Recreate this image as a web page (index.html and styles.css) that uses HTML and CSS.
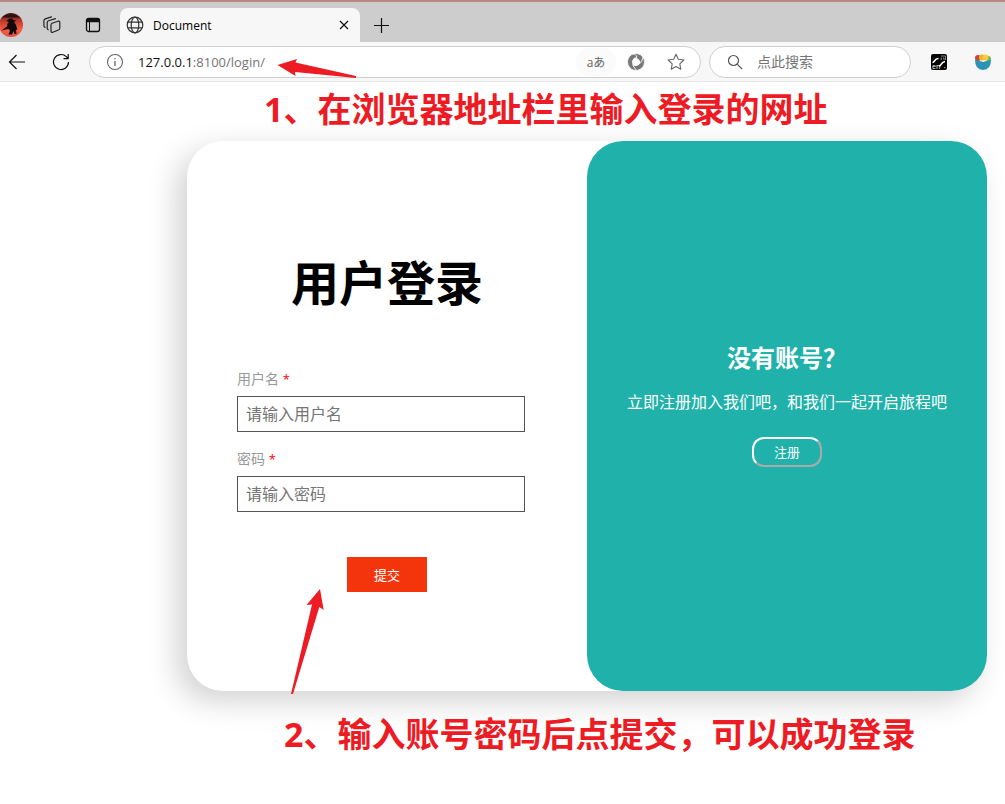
FILE: index.html
```html
<!DOCTYPE html>
<html lang="zh-CN">
<head>
<meta charset="utf-8">
<meta name="viewport" content="width=device-width, initial-scale=1">
<title>Document</title>
<link rel="stylesheet" href="styles.css">
</head>
<body>
<header class="browser">
  <div class="tabs">
    <div class="tab-tools">
      <button class="icon-btn" aria-label="个人资料">
        <svg width="24" height="24" viewBox="0 0 24 24"><defs><linearGradient id="sky" x1="0" y1="0" x2="0" y2="1"><stop offset="0" stop-color="#3a1512"/><stop offset=".3" stop-color="#b8372a"/><stop offset=".7" stop-color="#ff5b43"/><stop offset="1" stop-color="#d8523f"/></linearGradient></defs><circle cx="12" cy="12" r="12" fill="url(#sky)"/><path d="M2.500 4.500Q12-2 21.500 4.500z" fill="#2a1210"/><path d="M9 7l1-1.500h3L14.500 7l3 .8-2.500 1 2 3.200 1.500 5-1.500-.5.5 4.500h-2l-1-3-1.500 3.500H9.500l1.500-4-1.500-1.500L2 17.500l6-4 .5-3L10 9 7 8z" fill="#120a0a"/></svg>
      </button>
      <button class="icon-btn" aria-label="工作区">
        <svg width="18" height="18" viewBox="0 0 18 18" fill="none" stroke="#222" stroke-width="1.200" stroke-linecap="round" stroke-linejoin="round"><path d="M9 7.200l6-2q1.800-.5 1.800 1.300v5.500q0 1.500-1.400 2l-5.600 2.200q-1.800.6-1.800-1.200V9q0-1.300 1-1.800zM5.200 13.800q-1-.3-1-1.500V6.800q0-1.500 1.300-2L12.500 2.600M2 11.300Q.9 11 .9 9.800V4.800Q.9 3.400 2.200 2.900L8.500.9"/></svg>
      </button>
      <button class="icon-btn" aria-label="标签页操作">
        <svg width="16" height="16" viewBox="0 0 16 16" fill="none" stroke="#111" stroke-width="1.300"><rect x="1.500" y="1.500" width="13" height="13" rx="2"/><path d="M1.500 3.500h13" stroke-width="3.500"/><path d="M4.500 5v9.500" stroke-width="1"/></svg>
      </button>
    </div>
    <div class="tab">
      <svg width="18" height="18" viewBox="0 0 18 18" fill="none" stroke="#333" stroke-width="1.200"><circle cx="9" cy="9" r="7.800"/><ellipse cx="9" cy="9" rx="3.800" ry="7.800"/><path d="M1.800 6.200h14.400M1.800 11.800h14.400"/></svg>
      <span class="tab-title">Document</span>
      <button class="icon-btn" aria-label="关闭标签页"><svg width="10" height="10" viewBox="0 0 10 10" stroke="#111" stroke-width="1.200"><path d="M1 1l8 8M9 1L1 9"/></svg></button>
    </div>
    <button class="icon-btn new-tab" aria-label="新建标签页"><svg width="15" height="15" viewBox="0 0 15 15" stroke="#111" stroke-width="1.200"><path d="M7.500 0v15M0 7.500h15"/></svg></button>
  </div>
  <div class="toolbar">
    <div class="nav">
      <button class="icon-btn" aria-label="后退"><svg width="18" height="16" viewBox="0 0 18 16" fill="none" stroke="#111" stroke-width="1.200"><path d="M17 8H1.500M8.500 1l-7 7 7 7"/></svg></button>
      <button class="icon-btn" aria-label="刷新"><svg width="18" height="18" viewBox="0 0 18 18" fill="none" stroke="#111" stroke-width="1.200"><path d="M16.500 9a7.500 7.500 0 1 1-2.200-5.300L16 5.500M16.200 1v4.700h-4.700"/></svg></button>
    </div>
    <div class="address">
      <svg width="18" height="18" viewBox="0 0 18 18" fill="none" stroke="#666" stroke-width="1.100"><circle cx="9" cy="9" r="7.500"/><path d="M9 8v5M9 5v1.300" stroke-width="1.300"/></svg>
      <a class="url" href="#"><span class="host">127.0.0.1</span>:8100/login/</a>
      <button class="icon-btn translate" aria-label="翻译">aあ</button>
      <button class="icon-btn" aria-label="扩展">
        <svg width="18" height="18" viewBox="0 0 18 18" fill="#777" stroke="#fff" stroke-width=".8"><defs><path id="blade" d="M1.300 5.300A8.600 8.600 0 0 1 17.600 9Q17 13.500 12.500 12Q14 9 11.500 6.500Q7.500 3.300 1.300 5.300z"/></defs><use href="#blade"/><use href="#blade" transform="rotate(120 9 9)"/><use href="#blade" transform="rotate(240 9 9)"/></svg>
      </button>
      <button class="icon-btn" aria-label="收藏"><svg width="18" height="18" viewBox="0 0 18 18" fill="none" stroke="#666" stroke-width="1.100" stroke-linejoin="round"><path d="M9 1.300l2.300 5 5.500.7-4 3.800 1 5.500L9 13.600l-4.800 2.700 1-5.500-4-3.800 5.500-.7z"/></svg></button>
    </div>
    <label class="search">
      <svg width="16" height="16" viewBox="0 0 16 16" fill="none" stroke="#555" stroke-width="1.200"><circle cx="6.500" cy="6.500" r="5"/><path d="M10.200 10.200l5 5"/></svg>
      <input type="search" placeholder="点此搜索" aria-label="点此搜索">
    </label>
    <div class="extensions">
      <button class="icon-btn" aria-label="翻译扩展"><svg width="16" height="16" viewBox="0 0 16 16"><rect width="16" height="16" rx="2" fill="#050505"/><path d="M1.500 8.500C4 8.500 3.500 4 7.500 4.500M8 12c3 0 1.500-4 6-4.500" fill="none" stroke="#fff" stroke-width="1.500"/><path d="M10 2h4.500v4M10.300 3.500V6M12 4h1v2M13 13.500h1.500" fill="none" stroke="#aaa" stroke-width=".8"/><text x="1" y="15" class="en-mark">en</text></svg></button>
      <button class="icon-btn" aria-label="果篮扩展"><svg width="16" height="16" viewBox="0 0 16 16"><circle cx="3" cy="4" r="3" fill="#cf4636"/><circle cx="13.500" cy="4.500" r="2.400" fill="#67b84a"/><circle cx="7" cy="3.500" r="3" fill="#f5b32d"/><circle cx="10.500" cy="3.500" r="3" fill="#ffc83d"/><path d="M0 5.500L8 8l8-2.500Q16 16 8 16T0 5.500z" fill="#2b93b6"/></svg></button>
    </div>
  </div>
</header>

<main class="page">
  <p class="note note-top">1、在浏览器地址栏里输入登录的网址</p>
  <section class="card">
    <form class="login">
      <h1>用户登录</h1>
      <label for="user">用户名 <span class="required">*</span></label>
      <input id="user" type="text" placeholder="请输入用户名">
      <label for="pass">密码 <span class="required">*</span></label>
      <input id="pass" type="password" placeholder="请输入密码">
      <button class="submit" type="submit">提交</button>
    </form>
    <aside class="signup">
      <h2>没有账号？</h2>
      <p>立即注册加入我们吧，和我们一起开启旅程吧</p>
      <button class="register" type="button">注册</button>
    </aside>
  </section>
  <p class="note note-bottom">2、输入账号密码后点提交，可以成功登录</p>
</main>

<svg class="arrow arrow-url" width="80" height="20" viewBox="0 0 80 20"><path d="M.5 6L20 0l-1.500 3.500L79 17v2l-61-6 .5 4z"/></svg>
<svg class="arrow arrow-submit" width="34" height="106" viewBox="0 0 34 106"><path d="M30 0L16.500 16l5.500-.5L1 105h2l26.300-87 4.400 3z"/></svg>
</body>
</html>
```
FILE: styles.css
```css
* { box-sizing: border-box; }

body {
  margin: 0;
  position: relative;
  min-height: 100vh;
  background: #fff;
  color: #000;
  font-family: "Open Sans", "Noto Sans CJK SC", sans-serif;
}

button, input { font-family: inherit; }

svg { display: block; flex: none; }

.icon-btn {
  display: flex;
  flex: none;
  align-items: center;
  justify-content: center;
  padding: 0;
  border: 0;
  background: none;
}

/* Browser frame */
.tabs {
  display: flex;
  align-items: center;
  height: 42px;
  padding-top: 6px;
  border-top: 2px solid #b98880;
  background: #cdcdcd;
}

.tab-tools {
  display: flex;
  align-items: center;
  gap: 20px;
  width: 121px;
  margin-left: -1px;
}

.tab-tools .icon-btn:nth-child(2) { margin-right: 4px; }

.tab {
  display: flex;
  align-items: center;
  gap: 9px;
  width: 240px;
  height: 34px;
  padding: 0 11px 0 6px;
  border-radius: 8px 8px 0 0;
  background: #f7f7f7;
}

.tab-title { flex: 1; font-size: 12px; }

.new-tab { margin-left: 14px; }

.toolbar {
  display: flex;
  align-items: center;
  height: 40px;
  padding-right: 14px;
  border-bottom: 1px solid #e8e8e8;
  background: #f7f7f7;
}

.nav {
  display: flex;
  gap: 26px;
  width: 89px;
  padding-left: 8px;
}

.address, .search {
  display: flex;
  align-items: center;
  height: 32px;
  border: 1px solid #d0d0d0;
  border-radius: 16px;
  background: #fff;
}

.address { flex: 1; padding: 0 15px 0 16px; gap: 22px; }

.url {
  flex: 1;
  margin-left: -8px;
  color: #757575;
  font-size: 13px;
  text-decoration: none;
}

.host { color: #111; }

.translate {
  width: 40px;
  height: 28px;
  margin-right: -11px;
  border-radius: 14px;
  background: #fbfbfb;
  color: #666;
  font-size: 12px;
}

.search { width: 202px; margin-left: 8px; padding: 0 17px; gap: 14px; }

.search input {
  flex: 1;
  min-width: 0;
  padding: 0;
  border: 0;
  outline: 0;
  background: none;
  font-size: 14px;
}

.search input::placeholder { color: #757575; }

.extensions { display: flex; gap: 28px; margin-left: 20px; }

.en-mark { fill: #fff; font-size: 7px; }

/* Page */
.page { padding: 0 18px 0 187px; }

.note {
  position: relative;
  z-index: 1;
  margin: 0;
  color: #ed1c24;
  font-size: 34px;
  font-weight: 700;
  line-height: 54px;
}

.note-top { padding: 0 0 5px 77px; }

.note-bottom { padding: 16px 0 0 97px; }

.card {
  display: grid;
  grid-template-columns: 1fr 1fr;
  min-height: 550px;
  border-radius: 36px;
  background: #fff;
  box-shadow: -10px 10px 30px rgba(0, 0, 0, 0.18);
}

.login {
  display: flex;
  flex-direction: column;
  padding: 106px 50px 98px;
}

.login h1 {
  margin: 0 0 49px;
  font-size: 48px;
  line-height: 72px;
  text-align: center;
}

.login label {
  margin-bottom: 6px;
  color: #999;
  font-size: 14px;
  line-height: 22px;
}

.required { color: #f00; font-size: 13px; }

.login input {
  width: 96%;
  height: 36px;
  margin-bottom: 16px;
  padding: 0 8px;
  border: 1px solid #555;
  font-size: 16px;
}

.login input::placeholder { color: #757575; }

.submit {
  align-self: center;
  width: 80px;
  height: 35px;
  margin-top: 29px;
  border: 0;
  background: #f4350b;
  color: #fff;
  font-size: 13px;
}

.signup {
  display: flex;
  flex-direction: column;
  align-items: center;
  justify-content: center;
  padding-bottom: 24px;
  border-radius: 36px;
  background: #20b2aa;
  color: #fff;
}

.signup h2 { margin: 0 0 16px; font-size: 24px; line-height: 32px; }

.signup p { margin: 0 0 23px; font-size: 16px; line-height: 24px; }

.register {
  width: 70px;
  height: 30px;
  padding: 0;
  border: 2px solid;
  border-color: #fff #aaa #aaa #fff;
  border-radius: 12px;
  background: transparent;
  color: #fff;
  font-size: 13px;
}

/* Pointers drawn over the page */
.arrow { position: absolute; z-index: 2; fill: #ed1c24; }

.arrow-url { top: 59px; left: 277px; }

.arrow-submit { top: 589px; left: 290px; }
```
